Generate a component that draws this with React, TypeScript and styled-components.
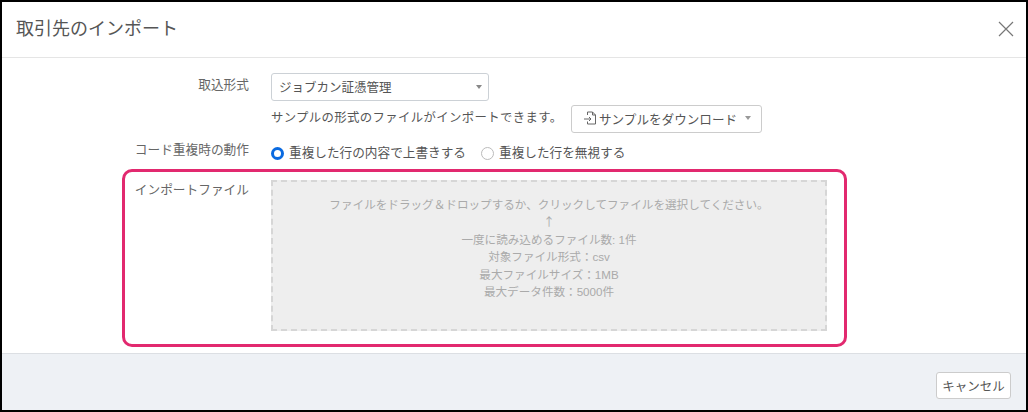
import styled, { createGlobalStyle } from "styled-components"

const GlobalStyle = createGlobalStyle`
  html, body {
    margin: 0;
    padding: 0;
    background: #000;
  }
  body {
    font-family: "Liberation Sans", "Noto Sans CJK JP", sans-serif;
    color: #555;
  }
`

const Frame = styled.div`
  width: 1028px;
  height: 412px;
  box-sizing: border-box;
  border: 2px solid #000;
  background: #fff;
  display: flex;
  flex-direction: column;
  overflow: hidden;
`

const Header = styled.div`
  height: 56px;
  flex: none;
  box-sizing: border-box;
  display: flex;
  align-items: center;
  justify-content: space-between;
  padding: 0 12px 2px 14px;
  border-bottom: 1px solid #e5e5e5;
`

const Title = styled.h4`
  margin: 0;
  font-size: 18px;
  font-weight: 400;
  line-height: 24px;
  color: #555;
`

const CloseButton = styled.button`
  width: 16px;
  height: 16px;
  padding: 0;
  border: 0;
  background: none;
  display: flex;
  color: #777;
`

const Body = styled.div`
  position: relative;
  flex: 1;
  padding-top: 15px;
`

const Row = styled.div<{ $height: number }>`
  display: grid;
  grid-template-columns: 247px 1fr;
  column-gap: 22px;
  height: ${(p) => p.$height}px;
`

const Label = styled.div<{ $top: number }>`
  text-align: right;
  font-size: 12.7px;
  line-height: 18px;
  color: #666;
  padding-top: ${(p) => p.$top}px;
`

const Field = styled.div`
  display: flex;
  flex-direction: column;
  align-items: flex-start;
`

const Select = styled.div`
  width: 218px;
  height: 28px;
  box-sizing: border-box;
  border: 1px solid #ccd1d6;
  border-radius: 3px;
  background: #fff;
  display: flex;
  align-items: center;
  justify-content: space-between;
  padding: 0 6px 1px 7px;
  font-size: 12.5px;
  color: #555;
`

const Caret = styled.span<{ $color: string }>`
  width: 0;
  height: 0;
  border-left: 3.5px solid transparent;
  border-right: 3.5px solid transparent;
  border-top: 4px solid ${(p) => p.$color};
`

const SampleRow = styled.div`
  display: flex;
  align-items: center;
  margin-top: 4px;
  gap: 16px;
`

const Hint = styled.span`
  font-size: 12.4px;
  letter-spacing: 0.35px;
  line-height: 18px;
  color: #555;
  width: 284px;
  margin-bottom: 3px;
  white-space: nowrap;
`

const DownloadButton = styled.button`
  width: 191px;
  height: 28px;
  box-sizing: border-box;
  border: 1px solid #ccc;
  border-radius: 3px;
  background: #fff;
  display: flex;
  align-items: center;
  gap: 1px;
  padding: 0 0 2px 10px;
  font-family: inherit;
  font-size: 12.6px;
  color: #555;
  white-space: nowrap;
`

const ButtonCaret = styled.span`
  margin-left: 7px;
  display: flex;
`

const Radios = styled.div`
  display: flex;
  align-items: flex-start;
  padding-top: 4px;
  font-size: 12.65px;
  line-height: 18px;
  color: #555;
`

const RadioItem = styled.label`
  display: flex;
  align-items: center;
  gap: 5px;
  margin-right: 15px;
  white-space: nowrap;
`

const RadioDot = styled.span<{ $checked?: boolean }>`
  width: 13px;
  height: 13px;
  box-sizing: border-box;
  border-radius: 50%;
  background: #fff;
  border: ${(p) => (p.$checked ? "3.5px solid #0a6ae0" : "1px solid #bbb")};
`

const DropZone = styled.div`
  width: 556px;
  height: 151px;
  box-sizing: border-box;
  padding-top: 14px;
  background: #eee;
  border: 2px dashed #d6d6d6;
  text-align: center;
  font-size: 11.6px;
  line-height: 17.4px;
  color: #aaa;
`

const DropLine = styled.div`
  white-space: nowrap;
`

const DropArrow = styled(DropLine)`
  font-family: "Noto Sans CJK JP", sans-serif;
`

const Highlight = styled.div`
  position: absolute;
  left: 120px;
  top: 111px;
  width: 725px;
  height: 178px;
  box-sizing: border-box;
  border: 3px solid #e2296f;
  border-radius: 10px;
  pointer-events: none;
`

const Footer = styled.div`
  height: 57px;
  flex: none;
  box-sizing: border-box;
  border-top: 1px solid #dcdfe3;
  background: #eef1f5;
  display: flex;
  justify-content: flex-end;
  align-items: flex-start;
  padding: 18px 15px 0 0;
`

const CancelButton = styled.button`
  width: 75px;
  height: 27px;
  box-sizing: border-box;
  border: 1px solid #ccc;
  border-radius: 3px;
  background: #fff;
  padding: 0 0 1px;
  font-family: inherit;
  font-size: 12.5px;
  color: #555;
`

const limitLines = [
  "一度に読み込めるファイル数: 1件",
  "対象ファイル形式：csv",
  "最大ファイルサイズ：1MB",
  "最大データ件数：5000件",
]

export default function App() {
  return (
    <>
      <GlobalStyle />
      <Frame>
        <Header>
          <Title>取引先のインポート</Title>
          <CloseButton aria-label="閉じる">
            <svg width="16" height="16" viewBox="0 0 16 16" fill="none" stroke="currentColor" strokeWidth="1.2">
              <path d="M1 1 L15 15 M15 1 L1 15" />
            </svg>
          </CloseButton>
        </Header>
        <Body>
          <Row $height={67}>
            <Label $top={3}>取込形式</Label>
            <Field>
              <Select>
                ジョブカン証憑管理
                <Caret $color="#888" />
              </Select>
              <SampleRow>
                <Hint>サンプルの形式のファイルがインポートできます。</Hint>
                <DownloadButton>
                  <svg width="16" height="16" viewBox="0 0 16 16" fill="none" stroke="#666" strokeWidth="1">
                    <path d="M5.5 5 V2 H10.5 L13.5 5 V14 H5.5 V11.5" />
                    <path d="M10.5 2 V5 H13.5" />
                    <path d="M2 9 H9 M7 7 L9 9 L7 11" />
                  </svg>
                  サンプルをダウンロード
                  <ButtonCaret>
                    <Caret $color="#999" />
                  </ButtonCaret>
                </DownloadButton>
              </SampleRow>
            </Field>
          </Row>
          <Row $height={40}>
            <Label $top={1}>コード重複時の動作</Label>
            <Radios>
              <RadioItem>
                <RadioDot $checked />
                重複した行の内容で上書きする
              </RadioItem>
              <RadioItem>
                <RadioDot />
                重複した行を無視する
              </RadioItem>
            </Radios>
          </Row>
          <Row $height={170}>
            <Label $top={1}>インポートファイル</Label>
            <DropZone>
              <DropLine>ファイルをドラッグ＆ドロップするか、クリックしてファイルを選択してください。</DropLine>
              <DropArrow>↑</DropArrow>
              {limitLines.map((line) => (
                <DropLine key={line}>{line}</DropLine>
              ))}
            </DropZone>
          </Row>
          <Highlight />
        </Body>
        <Footer>
          <CancelButton>キャンセル</CancelButton>
        </Footer>
      </Frame>
    </>
  )
}
